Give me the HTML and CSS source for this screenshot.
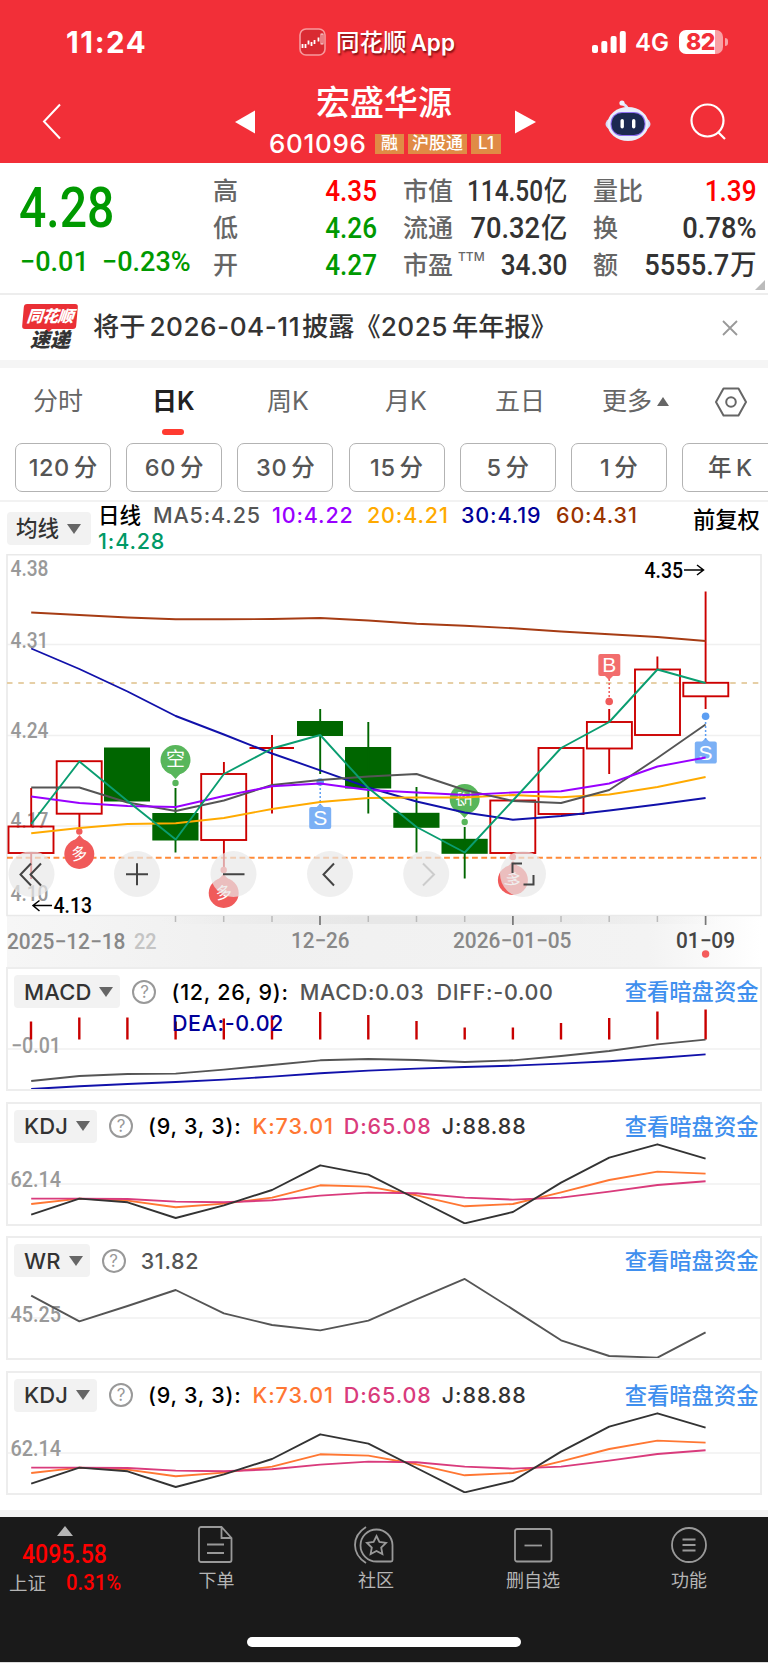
FILE: index.html
```html
<!DOCTYPE html>
<html lang="zh-CN">
<head>
<meta charset="utf-8">
<title>宏盛华源 601096</title>
<link rel="stylesheet" href="styles.css">
</head>
<body>
<div class="app">
  <header class="top">
    <div class="status">
      <div class="time">11:24</div>
      <div class="island">
        <svg width="27" height="28" viewBox="0 0 27 28"><rect x="1" y="1" width="25" height="26" rx="6" fill="#d92a32" stroke="#f79a9d" stroke-width="1.6"/><path d="M3.500 16v4M6.500 16v4M9.500 12.500v4M12.500 14v4M15.500 12v4M19.500 9.500v4" stroke="#fff" stroke-width="1.800"/><rect x="22" y="6" width="2" height="10" fill="none" stroke="#fff" stroke-width=".8"/></svg>
        <span>同花顺<b>App</b></span>
      </div>
      <div class="signals">
        <svg width="34" height="23" viewBox="0 0 34 23" fill="#fff"><rect y="14" width="6" height="8" rx="2"/><rect x="9.300" y="10" width="6" height="12" rx="2"/><rect x="18.600" y="5" width="6" height="17" rx="2"/><rect x="27.800" y="0" width="6" height="22" rx="2"/></svg>
        <span class="net">4G</span>
        <span class="battery"><span>82</span></span>
      </div>
    </div>
    <div class="titlebar">
      <svg class="back" width="20" height="37" viewBox="0 0 20 37"><path d="M18 1.500L2 18.500L18 35.500" fill="none" stroke="#fff" stroke-width="2"/></svg>
      <svg class="prev" width="20" height="24" viewBox="0 0 20 24"><path d="M20 0.500v23L0 12z" fill="#fff"/></svg>
      <div class="stock">
        <h1>宏盛华源</h1>
        <div class="code"><span>601096</span><i>融</i><i>沪股通</i><i>L1</i></div>
      </div>
      <svg class="next" width="21" height="24" viewBox="0 0 21 24"><path d="M0 0.500v23L21 12z" fill="#fff"/></svg>
      <svg class="robot" width="46" height="42" viewBox="0 0 46 42"><path d="M23 9Q21 5 17 3.500" fill="none" stroke="#dce6fb" stroke-width="2.500"/><circle cx="17" cy="3" r="2.600" fill="#eef3ff"/><ellipse cx="23" cy="24" rx="22.500" ry="10" fill="#d5d8f4"/><ellipse cx="23" cy="24" rx="20.500" ry="17" fill="#e9eefb"/><rect x="5.500" y="12" width="35" height="24" rx="11.500" fill="#8d6df0"/><rect x="6.500" y="13" width="33" height="22" rx="10.500" fill="#1c2850"/><rect x="15.500" y="19" width="3.400" height="9.500" rx="1.700" fill="#fff"/><rect x="27" y="19" width="3.400" height="9.500" rx="1.700" fill="#fff"/></svg>
      <svg class="search" width="37" height="37" viewBox="0 0 37 37" fill="none" stroke="#fff" stroke-width="2.200"><circle cx="17.500" cy="17.500" r="16"/><path d="M28.500 29.500l6.500 6.500"/></svg>
    </div>
  </header>

  <section class="quote">
    <div class="price">
      <div class="last"><span class="din">4.28</span></div>
      <div class="chg"><span class="din">−0.01</span><span class="din">−0.23%</span></div>
    </div>
    <dl class="c1"><dt>高</dt><dd class="up din">4.35</dd><dt>低</dt><dd class="down din">4.26</dd><dt>开</dt><dd class="down din">4.27</dd></dl>
    <dl class="c2"><dt>市值</dt><dd class="din slim">114.50<em>亿</em></dd><dt>流通</dt><dd class="din wide">70.32<em>亿</em></dd><dt>市盈<sup>TTM</sup></dt><dd class="din">34.30</dd></dl>
    <dl class="c3"><dt>量比</dt><dd class="up din">1.39</dd><dt>换</dt><dd class="din wide">0.78%</dd><dt>额</dt><dd class="din wide">5555.7<em>万</em></dd></dl>
    <svg class="corner" width="10" height="10" viewBox="0 0 10 10"><path d="M10 0v10H0z" fill="#bbb"/></svg>
  </section>

  <section class="notice">
    <div class="express"><b>同花顺</b><strong>速递</strong></div>
    <p>将于<span class="n1">2026-04-11</span>披露《<span class="n2">2025</span>年年报》</p>
    <svg width="16" height="16" viewBox="0 0 16 16"><path d="M1 1l14 14M15 1L1 15" stroke="#999" stroke-width="1.800"/></svg>
  </section>

  <nav class="tabs">
    <span>分时</span><span class="on">日K</span><span>周K</span><span>月K</span><span>五日</span>
    <span class="more">更多<svg width="12" height="9" viewBox="0 0 12 9"><path d="M6 0l6 9H0z" fill="#666"/></svg></span>
    <svg class="hex" width="32" height="30" viewBox="0 0 32 30" fill="none" stroke="#666" stroke-width="2"><path d="M8.500 1.500h15L31 15l-7.500 13.500h-15L1 15z" stroke-linejoin="round"/><circle cx="16" cy="15" r="4.800"/></svg>
  </nav>
  <div class="periods"><span>120<b>分</b></span><span>60<b>分</b></span><span>30<b>分</b></span><span>15<b>分</b></span><span>5<b>分</b></span><span>1<b>分</b></span><span>年<b>K</b></span></div>

  <section class="ma">
    <div class="pick cn"><span>均线</span><i></i></div>
    <div class="vals"><b>日线</b><span class="g">MA5:4.25</span><span class="p">10:4.22</span><span class="y">20:4.21</span><span class="n">30:4.19</span><span class="r">60:4.31</span><span class="t">1:4.28</span></div>
    <div class="adj">前复权</div>
  </section>

  <svg class="kline" width="768" height="413" viewBox="0 554 768 413">
    <defs>
      <linearGradient id="axis" x1="0" x2="1" y1="0" y2="0"><stop offset="0" stop-color="#f6f6f6"/><stop offset=".3" stop-color="#f0f0f0"/><stop offset=".85" stop-color="#f3f3f3"/><stop offset="1" stop-color="#fff"/></linearGradient>
      <linearGradient id="shade" x1="0" x2="1" y1="0" y2="0"><stop offset="0" stop-color="#ddd" stop-opacity="0"/><stop offset=".35" stop-color="#ddd"/><stop offset=".65" stop-color="#ddd"/><stop offset="1" stop-color="#ddd" stop-opacity="0"/></linearGradient>
    </defs>
    <rect x="7" y="916" width="754" height="51" fill="url(#axis)"/>
    <rect x="160" y="916" width="560" height="8" fill="url(#shade)" opacity=".5"/>
    <path d="M7 644.500H761M7 735.500H761M7 826H761" stroke="#f0f0f0" stroke-width="1.500"/>
    <path d="M7 915.500V554.800H761V915.500z" fill="none" stroke="#e9e9e9" stroke-width="1.600"/>
    <path d="M7 683H761" stroke="#e6cfa6" stroke-width="2" stroke-dasharray="5.500 5.800"/>
    <path d="M7 857.700H761" stroke="#ff8a38" stroke-width="2" stroke-dasharray="5.800 3.500"/>

    <g class="label">
      <text x="10.500" y="576" textLength="38" lengthAdjust="spacingAndGlyphs">4.38</text>
      <text x="10.500" y="647.500" textLength="38" lengthAdjust="spacingAndGlyphs">4.31</text>
      <text x="10.500" y="738" textLength="38" lengthAdjust="spacingAndGlyphs">4.24</text>
      <text x="10.500" y="828" textLength="38" lengthAdjust="spacingAndGlyphs">4.17</text>
      <text x="10.500" y="900.500" textLength="38" lengthAdjust="spacingAndGlyphs">4.10</text>
    </g>

    <g fill="#fff" stroke="#cc0000" stroke-width="1.900">
      <path d="M31.200 788V826M31.200 853V879M79.400 814V827M223.900 762V774M223.900 840V867M272 735V813.500M609.200 709V722M609.200 748V774M657.400 656.500V669M705.600 591.500V683M705.600 696V709" />
      <path d="M249.500 748H294" stroke-width="2.200"/>
      <g fill="none"><rect x="8.500" y="826.500" width="45" height="26.500"/><rect x="56.700" y="761.200" width="45" height="52.500"/><rect x="201.200" y="774" width="45" height="66"/><rect x="490.300" y="800.500" width="45" height="52.500"/><rect x="538.500" y="748" width="45" height="66"/><rect x="586.900" y="722" width="45" height="26.500"/><rect x="635" y="669.500" width="45" height="65.500"/><rect x="683.300" y="682.800" width="45" height="13.500" fill="#fff"/></g>
    </g>
    <g fill="#006600">
      <rect x="104" y="747.500" width="46" height="54"/><rect x="152.300" y="813" width="46.200" height="27.500"/><rect x="297" y="721" width="46" height="15"/><rect x="345" y="747" width="46.200" height="41.500"/><rect x="393.300" y="812.800" width="46.200" height="15"/><rect x="441.500" y="838.800" width="46.200" height="15"/>
      <path d="M175.500 788V852.500M320.200 709V774M368.300 722V813.500M416.500 787V852.500M464.700 827V878.500" stroke="#006600" stroke-width="1.900"/>
    </g>

    <g class="badge">
      <circle cx="175.500" cy="760" r="15" fill="#58b65b"/><path d="M170 773h11l-5.500 6z" fill="#58b65b"/><circle cx="175.500" cy="783" r="3.200" fill="#58b65b"/><text x="175.500" y="766">空</text>
      <circle cx="464.700" cy="799" r="15" fill="#58b65b"/><path d="M459 812h11l-5.500 6z" fill="#58b65b"/><circle cx="464.700" cy="822" r="3.200" fill="#58b65b"/><text transform="translate(464.700 799) rotate(-90) scale(.85)" y="6.500">空</text>
      <circle cx="79.300" cy="854" r="15" fill="#f05a5a"/><path d="M74 841h11l-5.500-6z" fill="#f05a5a"/><circle cx="79.300" cy="831.500" r="3.200" fill="#f05a5a"/><text transform="translate(79.300 854) rotate(-8) scale(.85)" y="6.500">多</text>
      <circle cx="223.700" cy="893" r="15" fill="#f05a5a"/><path d="M218 880h11l-5.500-6z" fill="#f05a5a"/><circle cx="223.700" cy="870" r="3.200" fill="#f05a5a"/><text transform="translate(223.700 893) rotate(-8) scale(.85)" y="6.500">多</text>
      <circle cx="512.900" cy="880" r="15" fill="#f05a5a"/><path d="M507.500 867h11l-5.500-6z" fill="#f05a5a"/><circle cx="512.900" cy="857" r="3.200" fill="#f05a5a"/><text transform="translate(512.900 880) rotate(20) scale(.85)" y="6.500">多</text>
      <rect x="598.300" y="654" width="22" height="22" rx="2" fill="#f26d6d"/><path d="M605 676h8l-4 4z" fill="#f26d6d"/><path d="M609.200 679V700" stroke="#f05a5a" stroke-width="1.500" stroke-dasharray="2 2"/><circle cx="609.200" cy="701.500" r="3.800" fill="#f05a5a"/><text class="bs" x="609.200" y="672">B</text>
      <rect x="694.800" y="741.500" width="22" height="22" rx="2" fill="#7bb0f5"/><path d="M701.600 742h8l-4-4z" fill="#7bb0f5"/><path d="M705.600 718V740" stroke="#5c9ef2" stroke-width="1.500" stroke-dasharray="2 2"/><circle cx="705.600" cy="716.200" r="3.800" fill="#5c9ef2"/><text class="bs" x="705.600" y="759.500">S</text>
      <rect x="309.200" y="807" width="22" height="22" rx="2" fill="#7bb0f5"/><path d="M316.200 807.500h8l-4-4z" fill="#7bb0f5"/><path d="M320.200 784V805" stroke="#5c9ef2" stroke-width="1.500" stroke-dasharray="2 2"/><circle cx="320.200" cy="782" r="3.800" fill="#5c9ef2"/><text class="bs" x="320.200" y="825">S</text>
    </g>

    <g class="lines" transform="translate(31.200) scale(48.170 1)">
      <polyline stroke="#a63c14" points="0,612.500 1,615 2,617.500 3,619.300 4,619.300 5,619 6,618 7,620.500 8,623.700 9,625.700 10,628.300 11,631.500 12,634.300 13,637 14,641"/>
      <polyline stroke="#1111aa" points="0,648.500 1,669 2,691.500 3,716 4,734.500 5,753.500 6,770.300 7,787.500 8,801.500 9,812.500 10,819.700 11,816 12,810.500 13,804.500 14,798"/>
      <polyline stroke="#ffaa00" points="0,833.200 1,828 2,824 3,823.300 4,818 5,809 6,802 7,798 8,797.500 9,797.500 10,795 11,797.300 12,794.500 13,787 14,777"/>
      <polyline stroke="#555" points="0,787.500 1,787.500 2,802.500 3,811 4,800.500 5,785 6,780 7,776.500 8,774 9,790 10,801 11,803 12,790 13,758 14,724.500"/>
      <polyline stroke="#9900ff" points="0,796.500 1,803 2,806 3,807 4,796 5,786.300 6,783.500 7,790 8,792.500 9,795 10,792.500 11,791.300 12,783.500 13,766.500 14,757.500"/>
      <polyline stroke="#0a9d70" points="0,824 1,761.500 2,801 3,839.500 4,774 5,748.500 6,735 7,788 8,827 9,852.500 10,800.500 11,748 12,722 13,669.500 14,683"/>
    </g>

    <g fill="#e8e8e8" fill-opacity=".7"><circle cx="31.500" cy="874" r="23"/><circle cx="137" cy="874" r="23"/><circle cx="233.500" cy="874" r="23"/><circle cx="330" cy="874" r="23"/><circle cx="426.200" cy="874" r="23"/><circle cx="523" cy="874" r="23"/></g>
    <g fill="none" stroke="#444" stroke-width="2">
      <path d="M31 863.500L20.500 874.500L31 885.500M41 863.500L30.500 874.500L41 885.500M126 874.300H148M137 863.300V885.300M223 874.300H244.500M334 863.500L323.500 874.500L334 885.500"/>
      <path d="M423 863.500L434 874.500L423 885.500" stroke="#ccc"/>
      <path d="M512.500 873V863.500H522M533.500 875V884.500H523.500"/>
      <path d="M684 570H703.500M697 565L703.500 570L697 575M52 905.500H33M39.500 900.500L33 905.500L39.500 911" stroke="#000" stroke-width="1.500"/>
    </g>
    <g class="label hi"><text x="644.500" y="578" textLength="38.500" lengthAdjust="spacingAndGlyphs">4.35</text><text x="53.500" y="913" textLength="38.500" lengthAdjust="spacingAndGlyphs">4.13</text></g>

    <path d="M175.500 916v6M223.700 916v6M272 916v6M368.300 916v6M416.500 916v6M464.700 916v6M561 916v6M609.200 916v6M657.400 916v6" stroke="#bbb" stroke-width="1.500"/>
    <path d="M320 916v9M512.900 916v9M705.600 916v9" stroke="#777" stroke-width="1.700"/>
    <g class="label date">
      <text x="7" y="948.500" textLength="118.500" lengthAdjust="spacingAndGlyphs">2025−12−18</text>
      <text x="134" y="948.500" textLength="22.500" lengthAdjust="spacingAndGlyphs" fill="#c4c4c4">22</text>
      <text x="291" y="948" textLength="58.500" lengthAdjust="spacingAndGlyphs">12−26</text>
      <text x="453" y="948" textLength="118.500" lengthAdjust="spacingAndGlyphs">2026−01−05</text>
      <text x="676" y="948" textLength="59" lengthAdjust="spacingAndGlyphs" fill="#444">01−09</text>
    </g>
    <circle cx="705.600" cy="954" r="3.700" fill="#f45b5b"/>
  </svg>

  <section class="panel">
    <svg class="plot" width="756" height="124" viewBox="6 0 756 124">
      <path d="M6 82H761" stroke="#f0f0f0" stroke-width="1.500"/>
      <text class="ylab" x="11" y="86" textLength="50" lengthAdjust="spacingAndGlyphs">−0.01</text>
      <path transform="translate(0 -967.500)" d="M31 1022V1040M79.300 1018V1040M127.400 1018V1040M175.600 1022V1040M223.800 1019V1040M272 1016V1040M320.200 1012.500V1040M368.300 1015.500V1040M416.500 1021.500V1040M464.700 1028V1040M512.900 1028V1040M561 1023.500V1040M609.200 1018.500V1040M657.400 1012V1040M705.600 1010V1040" stroke="#c80000" stroke-width="2.400"/>
      <g class="lines" transform="translate(31.200 -7) scale(48.170 .3333)">
        <polyline stroke="#555" points="0,363 1,348 2,342 3,341 4,329 5,315 6,301 7,297 8,300 9,306 10,301 11,288 12,273 13,253 14,239"/>
        <polyline stroke="#1111aa" points="0,387 1,379 2,372 3,366 4,359 5,350 6,340 7,332 8,326 9,321 10,317 11,311 12,304 13,294 14,283"/>
      </g>
    </svg>
    <div class="head"><div class="pick">MACD<i></i></div><span class="q">?</span><span class="k">(12, 26, 9):</span><span class="g">MACD:0.03</span><span class="g">DIFF:-0.00</span><a>查看暗盘资金</a></div>
    <div class="dea">DEA:-0.02</div>
  </section>

  <section class="panel">
    <svg class="plot" width="756" height="124" viewBox="6 0 756 124">
      <defs><g id="kdj" class="lines" transform="translate(31.200 -142) scale(48.170 .3333)">
        <polyline stroke="#ff7733" points="0,732 1,716 2,722 3,742 4,731 5,713 6,676 7,680 8,706 9,739 10,732 11,697 12,660 13,635 14,641"/>
        <polyline stroke="#d93b7c" points="0,716 1,716 2,717 3,725 4,727 5,721 6,707 7,698 8,700 9,713 10,719 11,713 12,695 13,675 14,664"/>
        <polyline stroke="#333" points="0,764 1,716 2,727 3,774 4,736 5,690 6,616 7,644 8,717 9,790 10,756 11,668 12,593 13,553 14,596"/>
      </g></defs>
      <path d="M6 82H761" stroke="#f0f0f0" stroke-width="1.500"/>
      <text class="ylab" x="10.500" y="85" textLength="50.500" lengthAdjust="spacingAndGlyphs">62.14</text>
      <use href="#kdj"/>
    </svg>
    <div class="head kd"><div class="pick">KDJ<i></i></div><span class="q">?</span><span class="k">(9, 3, 3):</span><span class="o">K:73.01</span><span class="m">D:65.08</span><span class="j">J:88.88</span><a>查看暗盘资金</a></div>
  </section>

  <section class="panel">
    <svg class="plot" width="756" height="124" viewBox="6 0 756 124">
      <path d="M6 82H761" stroke="#f0f0f0" stroke-width="1.500"/>
      <text class="ylab" x="10.500" y="86" textLength="50.500" lengthAdjust="spacingAndGlyphs">45.25</text>
      <g class="lines" transform="translate(31.200 -6) scale(48.170 .3333)"><polyline stroke="#555" points="0,197 1,274 2,228 3,180 4,250 5,285 6,301 7,272 8,208 9,147 10,238 11,331 12,378 13,383 14,307"/></g>
    </svg>
    <div class="head"><div class="pick">WR<i></i></div><span class="q">?</span><span class="g w">31.82</span><a>查看暗盘资金</a></div>
  </section>

  <section class="panel">
    <svg class="plot" width="756" height="124" viewBox="6 0 756 124">
      <path d="M6 82H761" stroke="#f0f0f0" stroke-width="1.500"/>
      <text class="ylab" x="10.500" y="85" textLength="50.500" lengthAdjust="spacingAndGlyphs">62.14</text>
      <use href="#kdj"/>
    </svg>
    <div class="head kd"><div class="pick">KDJ<i></i></div><span class="q">?</span><span class="k">(9, 3, 3):</span><span class="o">K:73.01</span><span class="m">D:65.08</span><span class="j">J:88.88</span><a>查看暗盘资金</a></div>
  </section>

  <footer class="bar">
    <div class="row">
      <div class="index">
        <svg width="16" height="10" viewBox="0 0 16 10"><path d="M8 0l8 10H0z" fill="#b5b5b5"/></svg>
        <div class="pt"><span class="din">4095.58</span></div>
        <div class="sz"><span>上证</span><b class="din">0.31%</b></div>
      </div>
      <div class="item i1"><svg width="35" height="37" viewBox="0 0 35 37"><path d="M3 1H23.500L33.500 12V34a2 2 0 0 1-2 2H3a2 2 0 0 1-2-2V3a2 2 0 0 1 2-2zM23.500 1V12H33.500M9 18.500H26M9 27H26"/></svg><span>下单</span></div>
      <div class="item i2"><svg width="40" height="38" viewBox="0 0 40 38"><path d="M12 1Q1 8 1 19T12 37M22.500 3.500A16 16 0 1 0 22.500 35.500H37a1.500 1.500 0 0 0 1.500-1.500V19A16 16 0 0 0 22.500 3.500z"/><path d="M22.500 10l2.900 6 6.600.9-4.800 4.600 1.200 6.600-5.900-3.200-5.900 3.200 1.200-6.600-4.800-4.600 6.600-.9z"/></svg><span>社区</span></div>
      <div class="item i3"><svg width="39" height="35" viewBox="0 0 39 35"><rect x="1" y="1" width="36.500" height="32.500" rx="2"/><path d="M10.500 17.500H28"/></svg><span>删自选</span></div>
      <div class="item i4"><svg width="36" height="36" viewBox="0 0 36 36"><circle cx="18" cy="18" r="17"/><path d="M11.500 12.500h13M11.500 18h13M11.500 23.500h13"/></svg><span>功能</span></div>
    </div>
    <div class="home"></div>
  </footer>
</div>
</body>
</html>
```
FILE: styles.css
```css
* { box-sizing: border-box; }
body { margin: 0; background: #fff; font-family: Inter, "Noto Sans CJK SC", sans-serif; color: #333; }
i, em { font-style: normal; }
svg { display: block; flex: none; }
.app { width: 768px; height: 1663px; overflow: hidden; display: flex; flex-direction: column; white-space: nowrap; }
.app > * { flex: none; }
.din { font-family: Roboto, "Noto Sans CJK SC", sans-serif; font-weight: 500; display: inline-block; transform: scaleX(.88); transform-origin: 0 50%; }

/* header */
.top { height: 163px; background: #f22f38; color: #fff; }
.status { height: 84px; display: flex; align-items: center; padding-left: 66px; }
.time { width: 233px; font-size: 29.500px; font-weight: 700; letter-spacing: 1.600px; }
.island { display: flex; align-items: center; width: 293px; font-size: 23.500px; font-weight: 500; text-shadow: 1px 2px 2px rgba(80, 0, 0, .7); }
.island span { padding-left: 10px; margin-top: -2px; }
.island b { font-weight: 600; margin-left: 4px; font-size: 22.500px; }
.signals { display: flex; align-items: center; }
.net { font-size: 24px; font-weight: 600; width: 43px; padding-left: 9px; margin-right: 10px; }
.battery { position: relative; width: 44px; height: 24px; border-radius: 7px; background: linear-gradient(90deg, #fff 82%, #f9a0a4 82%); color: #f22f38; font-size: 23px; font-weight: 800; line-height: 24px; padding-left: 7px; }
.battery span { letter-spacing: -.5px; }
.battery::after { content: ""; position: absolute; left: 45.500px; top: 8px; width: 3px; height: 8px; border-radius: 0 3px 3px 0; background: #f9a0a4; }
.titlebar { height: 79px; display: flex; align-items: flex-start; padding-left: 42px; }
.back { margin: 19px 173px 0 0; }
.prev { margin-top: 26px; }
.stock { width: 260px; }
h1 { margin: -1px 2px 0 0; font-size: 34px; line-height: 39px; font-weight: 500; text-align: center; }
.code { display: flex; align-items: center; gap: 4px; height: 26px; margin-top: 9px; padding-left: 14px; font-size: 26px; font-weight: 450; line-height: 24px; }
.code span { width: 102px; letter-spacing: .7px; margin-top: -1px; }
.code i { height: 20px; line-height: 19px; background: #e08b45; font-size: 17px; padding: 0 6px; font-weight: 500; margin-top: -1px; }
.code i:nth-child(3) { padding: 0 4px; }
.code i:nth-child(4) { padding: 0; width: 30px; text-align: center; }
.next { margin-top: 26px; }
.robot { margin: 16px 39px 0 69px; }
.search { margin-top: 19px; }

/* quote */
.quote { position: relative; height: 132px; border-bottom: 2px solid #ededed; display: flex; padding-top: 10px; }
.price { width: 213px; color: #009900; }
.last { height: 70px; line-height: 69px; padding-left: 19px; font-size: 55px; }
.last .din { transform: scaleX(.875); }
.chg { display: flex; height: 37px; line-height: 38px; font-size: 28px; padding-left: 20px; }
.chg .din { width: 82px; font-weight: 500; transform: scaleX(.965); }
dl { margin: 0; display: grid; grid-template-columns: auto minmax(0, 1fr); grid-auto-rows: 37px; align-items: center; line-height: 37px; }
dt { font-size: 25px; color: #666; font-weight: 450; }
dd { margin: 0; font-size: 29px; color: #333; }
dd.din { display: flex; justify-content: flex-end; transform-origin: 100% 50%; font-weight: 500; transform: scaleX(.9); }
dd.wide { transform: scaleX(.94); }
dd.slim { transform: scaleX(.84); }
dd em { font-size: 28px; display: inline-block; margin-left: 1px; font-weight: 500; }
sup { font-size: 12px; line-height: 0; vertical-align: 13px; margin-left: 5px; }
.up { color: #f00; } .down { color: #009900; }
.c1 { width: 164px; }
.c2 { width: 164px; margin-left: 26px; }
.c3 { width: 163.500px; margin-left: 26px; }
.corner { position: absolute; right: 3px; bottom: 3px; }

/* notice */
.notice { height: 73px; border-bottom: 8px solid #f5f5f5; display: flex; align-items: center; padding-left: 22px; }
.express { width: 56px; height: 48px; display: flex; flex-direction: column; align-items: center; font-style: italic; }
.express b { position: relative; width: 54px; height: 25px; background: #ea2f35; color: #fff; border-radius: 3px; font-size: 16px; line-height: 24px; text-align: center; transform: skewX(-5deg); font-weight: 900; letter-spacing: -.5px; }
.express b::after { content: ""; position: absolute; left: 23px; top: 24px; border: 4px solid transparent; border-top-color: #ea2f35; }
.express strong { font-size: 20px; line-height: 23px; font-weight: 900; }
.notice p { margin: -6px 0 0 15px; width: 629px; font-size: 26.200px; font-weight: 500; }
.n1 { margin: 0 2px 0 4px; letter-spacing: .5px; } .n2 { margin-right: 4px; letter-spacing: .5px; }

/* tabs */
.tabs { height: 66px; display: grid; grid-template-columns: 119px 115px 118px 110px 107px 113px 32px; padding-left: 33px; align-items: center; font-size: 25px; color: #666; line-height: 67px; }
.tabs .on { position: relative; color: #222; font-weight: 600; }
.tabs .on::after { content: ""; position: absolute; left: 10px; bottom: 0; width: 22px; height: 6px; border-radius: 3px; background: #ff3b30; }
.more { display: flex; align-items: center; gap: 5px; }
.periods { display: flex; gap: 15.200px; height: 68px; padding: 9px 0 0 15px; border-bottom: 2px solid #f2f2f2; overflow: hidden; }
.periods span { flex: none; width: 96px; height: 49px; border: 1.500px solid #b3b3b3; border-radius: 7px; text-align: center; line-height: 48px; font-size: 23.500px; color: #555; font-weight: 500; letter-spacing: .6px; }
.periods b { font-weight: 500; margin-left: 4px; letter-spacing: 0; }

/* averages */
.ma { height: 52px; display: flex; padding-left: 7px; }
.pick { display: flex; align-items: center; height: 33px; background: #f2f2f2; border-radius: 4px; padding: 0 7px 0 10px; color: #333; font-weight: 500; font-size: 22px; }
.pick i { border: 7px solid transparent; border-top: 10px solid #666; border-bottom: 0; margin-left: 8px; }
.ma .pick { margin-top: 10px; width: 84px; font-size: 21.500px; padding-left: 9px; }
.pick span { margin-top: -4px; }
.vals { width: 595px; margin-left: 7px; display: grid; grid-template-columns: 55px 119px 95px 94px 95px 90px; grid-auto-rows: 26px; line-height: 26px; font-size: 21.500px; font-weight: 500; letter-spacing: .85px; }
.vals b { font-weight: 500; color: #000; letter-spacing: 0; font-size: 21.500px; }
.g { color: #555; } .p { color: #9900ff; } .y { color: #ffaa00; } .n { color: #000099; } .r { color: #993300; } .t { color: #009966; }
.adj { color: #000; font-weight: 500; font-size: 22.300px; line-height: 35px; }

/* charts */
.label text, .ylab { font: 500 21.500px Roboto, sans-serif; }
.label { fill: #999; }
.ylab { fill: #999; }
.hi { fill: #000; }
.date { fill: #888; }
.badge text { font: 19px "Noto Sans CJK SC", sans-serif; fill: #fff; text-anchor: middle; }
.badge .bs { font: 500 21px "Liberation Sans", sans-serif; }
.lines polyline { fill: none; stroke-width: 1.900; vector-effect: non-scaling-stroke; stroke-linejoin: round; }

.panel { position: relative; height: 124px; margin: 0 6px 10.500px; }
.panel::after { content: ""; position: absolute; inset: 0; border: 2px solid #ededed; pointer-events: none; }
.plot { position: absolute; inset: 0; }
.head { position: relative; display: flex; align-items: center; height: 33px; margin: 0 3.500px 0 8px; top: 8px; font-size: 21.500px; font-weight: 500; letter-spacing: .75px; }
.head .pick { letter-spacing: .15px; }
.q { width: 24px; height: 24px; border: 2px solid #999; border-radius: 50%; color: #999; font-size: 17px; line-height: 21px; text-align: center; margin: 0 15px 0 12px; font-weight: 400; flex: none; letter-spacing: 0; }
.k { color: #000; margin-right: 11px; }
.head .g { margin-right: 12px; letter-spacing: .7px; }
.o, .m, .j { letter-spacing: .9px; }
.o { color: #ff7733; margin-right: 10px; } .m { color: #d93b7c; margin-right: 10px; } .j { color: #333; }
.head a { margin-left: auto; margin-top: -3px; color: #3f8fee; font-size: 22.300px; font-weight: 500; letter-spacing: 0; }
.dea { position: relative; margin: 9px 0 0 166px; font-size: 21.500px; line-height: 26px; font-weight: 500; color: #000099; padding-top: 1px; letter-spacing: .6px; }

/* bottom bar */
.bar { height: 153px; margin-top: 5px; background: #1a1a1a; border-top: 7px solid #f3f3f3; border-bottom: 1px solid #ddd; color: #b5b5b5; }
.row { display: flex; height: 120px; padding-top: 9px; }
.index { width: 197px; }
.index svg { margin-left: 57px; }
.pt { color: #f00; font-size: 25px; line-height: 36px; height: 35px; padding-left: 22px; }
.pt .din, .sz .din { font-weight: 500; transform: scaleX(.92); }
.sz { display: flex; align-items: center; font-size: 18.500px; line-height: 24px; padding-left: 9px; }
.sz .din { color: #f00; font-size: 22px; margin-left: 20px; transform: scaleX(.92); }
.item { display: flex; flex-direction: column; align-items: center; justify-content: space-between; height: 69px; font-size: 18px; line-height: 28px; }
.item svg { fill: none; stroke: #999; stroke-width: 1.800; }
.i1 { width: 36px; margin-right: 121px; }
.i1 span { padding-left: 3px; }
.i2 { width: 40px; margin-right: 112px; }
.i2 span { padding-left: 4px; }
.i3 { width: 54px; margin-right: 111px; }
.i3 svg { margin-top: 2px; }
.i4 { width: 36px; }
.i4 svg { margin-top: 1px; }
.home { width: 274px; height: 10px; border-radius: 5px; background: #fff; margin: 0 auto; }
```
